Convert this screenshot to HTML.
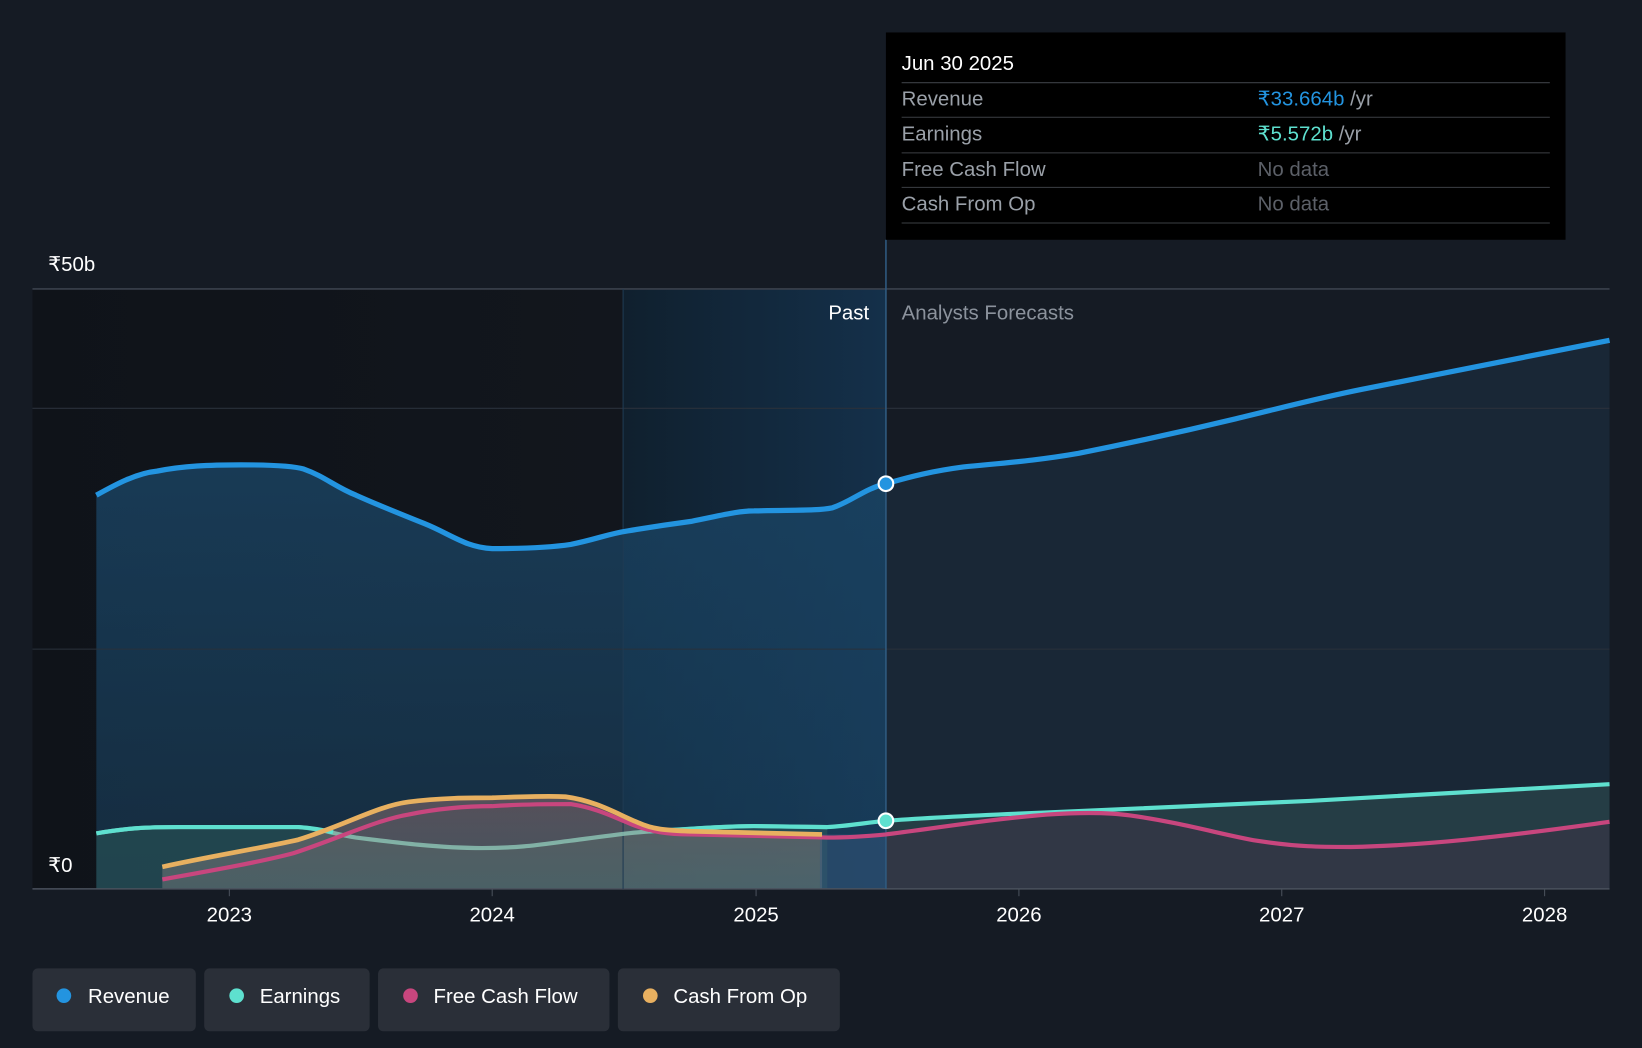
<!DOCTYPE html>
<html><head><meta charset="utf-8"><style>
html,body{margin:0;padding:0;background:#151b24;width:1642px;height:1048px;overflow:hidden}
svg{display:block;font-family:"Liberation Sans","DejaVu Sans",sans-serif}
</style></head><body>
<svg width="1642" height="1048" viewBox="0 0 1568 1001" preserveAspectRatio="none">
<defs>
<linearGradient id="past" x1="0" x2="1"><stop offset="0" stop-color="#0f1319"/><stop offset="1" stop-color="#12161d"/></linearGradient>
<linearGradient id="hl" x1="0" x2="1"><stop offset="0" stop-color="#10202e"/><stop offset="1" stop-color="#14304a"/></linearGradient>
<linearGradient id="revp" x1="0" y1="0" x2="0" y2="1"><stop offset="0" stop-color="#1a4464" stop-opacity=".8"/><stop offset="1" stop-color="#1a4464" stop-opacity=".5"/></linearGradient>
<linearGradient id="gray" x1="0" y1="0" x2="0" y2="1"><stop offset="0" stop-color="#8a6a6a" stop-opacity=".55"/><stop offset="1" stop-color="#888" stop-opacity=".4"/></linearGradient>
</defs>
<rect width="1568" height="1001" fill="#151b24"/>
<rect x="31" y="276" width="564" height="573" fill="url(#past)"/>
<rect x="595" y="276" width="251" height="573" fill="url(#hl)"/>
<path d="M92,473 C110,463 130,452 150,450 C175,445 200,444 230,444 C260,444 280,445 290,448 C310,455 320,465 340,473 C360,482 385,492 405,500 C430,510 445,523 470,524 C500,524 525,523 545,520 C570,515 580,510 600,507 C630,502 645,500 660,498 C690,492 705,488 720,488 C760,487 780,488 795,485 C815,478 825,467 846,462 L846,849 L92,849 Z" fill="url(#revp)"/>
<path d="M846,462 C870,455 890,450 920,446 C960,442 990,440 1030,433 C1080,423 1130,412 1180,400 C1230,388 1260,380 1300,372 L1537,325 L1537,849 L846,849 Z" fill="#1a2939" opacity=".9"/>
<path d="M92,796 C120,791 140,790 170,790 L285,790 C310,792 320,797 340,800 C380,805 420,810 460,810 C500,810 520,806 545,803 C590,797 610,794 640,793 C680,790 700,789 720,789 L790,790 L790,849 L92,849 Z" fill="#2c5a5a" opacity=".55"/>
<path d="M846,784 C900,780 950,778 1000,776 L1250,765 L1537,749 L1537,849 L846,849 Z" fill="#28444a" opacity=".8"/>
<path d="M155,828 C200,818 250,810 285,802 C330,788 360,770 390,766 C420,762 450,762 470,762 C500,761 520,760 540,761 C570,765 590,778 610,786 C625,793 640,793 660,794 L785,797 L785,849 L155,849 Z" fill="url(#gray)"/>
<path d="M846,797 C900,790 950,782 1000,778 C1030,776 1060,776 1080,779 C1130,786 1170,798 1200,803 C1240,809 1260,809 1290,809 C1340,808 1380,804 1400,802 C1460,796 1500,790 1537,785 L1537,849 L846,849 Z" fill="#3a3346" opacity=".6"/>
<rect x="783" y="797" width="63" height="52" fill="#3a5a80" opacity=".45"/>
<line x1="31" y1="276" x2="1537" y2="276" stroke="#3a414c" stroke-width="1.5"/>
<line x1="31" y1="390" x2="1537" y2="390" stroke="#2a313b"/>
<line x1="31" y1="620" x2="1537" y2="620" stroke="#2a313b"/>
<line x1="31" y1="849" x2="1537" y2="849" stroke="#4a515c" stroke-width="1.5"/>
<line x1="595" y1="276" x2="595" y2="849" stroke="#1f3a52"/>
<line x1="846" y1="229" x2="846" y2="849" stroke="#2f5a80" stroke-width="1.5"/>
<g stroke="#4a515c"><line x1="219" y1="849" x2="219" y2="856"/><line x1="470" y1="849" x2="470" y2="856"/><line x1="722" y1="849" x2="722" y2="856"/><line x1="973" y1="849" x2="973" y2="856"/><line x1="1224" y1="849" x2="1224" y2="856"/><line x1="1475" y1="849" x2="1475" y2="856"/></g>
<path d="M92,796 C120,791 140,790 170,790 L285,790 C310,792 320,797 340,800 C380,805 420,810 460,810 C500,810 520,806 545,803 C590,797 610,794 640,793 C680,790 700,789 720,789 L790,790" fill="none" stroke="#8ec8b8" stroke-width="4" opacity=".8"/>
<path d="M92,796 C120,791 140,790 170,790 L285,790 C300,791 310,793 318,795" fill="none" stroke="#5ee0cf" stroke-width="4"/>
<path d="M620,794 C650,792 700,789 720,789 L790,790 C810,789 825,786 846,784 C900,780 950,778 1000,776 L1250,765 L1537,749" fill="none" stroke="#5ee0cf" stroke-width="4"/>
<path d="M155,840 C200,832 250,823 280,815 C320,802 360,783 390,778 C420,772 450,770 470,770 C500,768 525,768 545,768 C570,772 585,780 600,786 C620,795 640,797 660,797 L790,800 C810,800 825,799 846,797 C900,790 950,782 1000,778 C1030,776 1060,776 1080,779 C1130,786 1170,798 1200,803 C1240,809 1260,809 1290,809 C1340,808 1380,804 1400,802 C1460,796 1500,790 1537,785" fill="none" stroke="#c8467e" stroke-width="4"/>
<path d="M155,828 C200,818 250,810 285,802 C330,788 360,770 390,766 C420,762 450,762 470,762 C500,761 520,760 540,761 C570,765 590,778 610,786 C625,793 640,793 660,794 L785,797" fill="none" stroke="#e8b060" stroke-width="4.5"/>
<path d="M92,473 C110,463 130,452 150,450 C175,445 200,444 230,444 C260,444 280,445 290,448 C310,455 320,465 340,473 C360,482 385,492 405,500 C430,510 445,523 470,524 C500,524 525,523 545,520 C570,515 580,510 600,507 C630,502 645,500 660,498 C690,492 705,488 720,488 C760,487 780,488 795,485 C815,478 825,467 846,462 C870,455 890,450 920,446 C960,442 990,440 1030,433 C1080,423 1130,412 1180,400 C1230,388 1260,380 1300,372 L1537,325" fill="none" stroke="#2394e0" stroke-width="5"/>
<circle cx="846" cy="462" r="7" fill="#2394e0" stroke="#fff" stroke-width="2"/>
<circle cx="846" cy="784" r="7" fill="#5ee0cf" stroke="#fff" stroke-width="2"/>
<g font-size="19.5" fill="#fff">
<text x="46" y="259">₹50b</text>
<text x="46" y="833">₹0</text>
<text x="830" y="305" text-anchor="end">Past</text>
<text x="861" y="305" fill="#8b929c">Analysts Forecasts</text>
<g text-anchor="middle"><text x="219" y="880">2023</text><text x="470" y="880">2024</text><text x="722" y="880">2025</text><text x="973" y="880">2026</text><text x="1224" y="880">2027</text><text x="1475" y="880">2028</text></g>
</g>
<rect x="846" y="31" width="649" height="198" fill="#000"/>
<g font-size="19.5">
<text x="861" y="67" fill="#fff">Jun 30 2025</text>
<g stroke="#3c3f44"><line x1="861" y1="79" x2="1480" y2="79"/><line x1="861" y1="112" x2="1480" y2="112"/><line x1="861" y1="146" x2="1480" y2="146"/><line x1="861" y1="179" x2="1480" y2="179"/><line x1="861" y1="213" x2="1480" y2="213"/></g>
<text x="861" y="101" fill="#9aa0a8">Revenue</text>
<text x="1201" y="101" fill="#2394e0">₹33.664b <tspan fill="#9aa0a8">/yr</tspan></text>
<text x="861" y="134" fill="#9aa0a8">Earnings</text>
<text x="1201" y="134" fill="#5ee0cf">₹5.572b <tspan fill="#9aa0a8">/yr</tspan></text>
<text x="861" y="168" fill="#9aa0a8">Free Cash Flow</text>
<text x="1201" y="168" fill="#5c6068">No data</text>
<text x="861" y="201" fill="#9aa0a8">Cash From Op</text>
<text x="1201" y="201" fill="#5c6068">No data</text>
</g>
<g font-size="19.5" fill="#fff">
<rect x="31" y="925" width="156" height="60" rx="5" fill="#2a2f38"/>
<circle cx="61" cy="951" r="7" fill="#2394e0"/><text x="84" y="958">Revenue</text>
<rect x="195" y="925" width="158" height="60" rx="5" fill="#2a2f38"/>
<circle cx="226" cy="951" r="7" fill="#5ee0cf"/><text x="248" y="958">Earnings</text>
<rect x="361" y="925" width="221" height="60" rx="5" fill="#2a2f38"/>
<circle cx="392" cy="951" r="7" fill="#c8467e"/><text x="414" y="958">Free Cash Flow</text>
<rect x="590" y="925" width="212" height="60" rx="5" fill="#2a2f38"/>
<circle cx="621" cy="951" r="7" fill="#e8b060"/><text x="643" y="958">Cash From Op</text>
</g>
</svg>
</body></html>
